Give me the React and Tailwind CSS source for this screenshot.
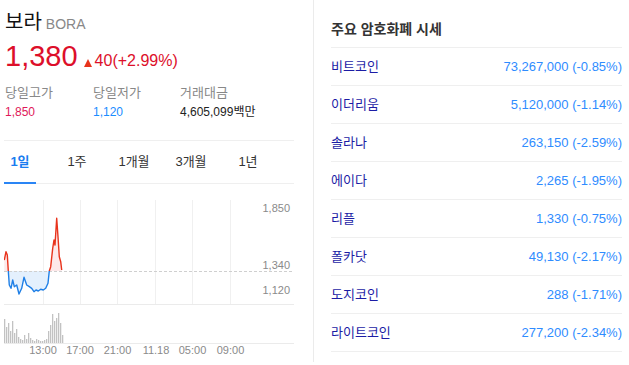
import React from 'react';

const coins = [
  { name: '비트코인', value: '73,267,000 (-0.85%)' },
  { name: '이더리움', value: '5,120,000 (-1.14%)' },
  { name: '솔라나', value: '263,150 (-2.59%)' },
  { name: '에이다', value: '2,265 (-1.95%)' },
  { name: '리플', value: '1,330 (-0.75%)' },
  { name: '폴카닷', value: '49,130 (-2.17%)' },
  { name: '도지코인', value: '288 (-1.71%)' },
  { name: '라이트코인', value: '277,200 (-2.34%)' },
];

const tabs = ['1일', '1주', '1개월', '3개월', '1년'];

// price line in page coordinates (svg viewBox is offset to match)
const pricePts = [
  [4.3, 260], [6, 251.7], [7.3, 255], [8.3, 271], [9.3, 285], [11, 288.3],
  [12.7, 280], [14.3, 286.7], [16.7, 285], [19, 294], [21.7, 288.3], [24, 277.3],
  [26.7, 285], [29.3, 286.7], [31.7, 288.3], [34, 291.7], [36, 290], [38.3, 291],
  [40.7, 289.3], [43.3, 290], [45.7, 288.3], [48, 283.3], [49.3, 271], [50.7, 266.7],
  [52.7, 248.3], [54, 240], [55, 245], [56.7, 218.3], [58, 236.7], [59.3, 256.7],
  [60.7, 261.7], [61.7, 270],
];

const volumes = [
  24, 16, 20, 12, 22, 10, 14, 6, 4, 3, 8, 4, 10, 5, 3, 2, 4, 3, 2, 2,
  3, 4, 12, 18, 29, 22, 25, 30, 20, 8,
];

const gridX = [43, 80, 117, 155, 192, 230];
const timeLabels = [
  ['13:00', 43], ['17:00', 80], ['21:00', 117.5], ['11.18', 156], ['05:00', 192.5], ['09:00', 230.5],
];

const PriceChart = () => {
  const line = pricePts.map((p, i) => `${i ? 'L' : 'M'}${p[0]} ${p[1]}`).join(' ');
  const area = `${line} L61.7 271 L4.3 271 Z`;
  return (
    <svg width="290" height="172" viewBox="4 190 290 172" className="block">
      <defs>
        <clipPath id="above"><rect x="0" y="190" width="300" height="81" /></clipPath>
        <clipPath id="below"><rect x="0" y="271" width="300" height="40" /></clipPath>
      </defs>
      {gridX.map((x) => (
        <line key={x} x1={x + 0.5} y1="200" x2={x + 0.5} y2="304" stroke="#f0f0f0" strokeWidth="1" />
      ))}
      <line x1="4" y1="304.5" x2="294" y2="304.5" stroke="#ebebeb" strokeWidth="1" />
      <line x1="4" y1="343.5" x2="294" y2="343.5" stroke="#ebebeb" strokeWidth="1" />
      <path d={area} fill="#fde9ea" clipPath="url(#above)" />
      <path d={area} fill="#e4f0fd" clipPath="url(#below)" />
      <line x1="4" y1="271.5" x2="292" y2="271.5" stroke="#cfcfcf" strokeWidth="1" strokeDasharray="3 2" />
      <path d={line} fill="none" stroke="#e8331c" strokeWidth="1.4" strokeLinejoin="round" clipPath="url(#above)" />
      <path d={line} fill="none" stroke="#1f7fe6" strokeWidth="1.4" strokeLinejoin="round" clipPath="url(#below)" />
      {volumes.map((h, i) => (
        <rect key={i} x={4 + i * 2} y={343 - h} width="1.3" height={h} fill="#c2c2c2" />
      ))}
      <g fontFamily="'Liberation Sans', Arial, sans-serif" fontSize="11" fill="#8a8a8a">
        <text x="290" y="212" textAnchor="end">1,850</text>
        <text x="290" y="269" textAnchor="end">1,340</text>
        <text x="290" y="294" textAnchor="end">1,120</text>
        {timeLabels.map(([t, x]) => (
          <text key={t} x={x} y="354" textAnchor="middle">{t}</text>
        ))}
      </g>
    </svg>
  );
};

export default function App() {
  return (
    <div
      className="flex w-[629px] h-[365px] bg-white overflow-hidden"
      style={{ fontFamily: "'Liberation Sans', 'Noto Sans CJK KR', sans-serif" }}
    >
      <div className="w-[314px] h-[362px] border-r border-[#ebebeb] pl-1 pr-[19px]">
        <div className="pt-[10px] pl-px flex items-baseline gap-[4px]">
          <span className="text-[20px] leading-[24px] text-[#111]">보라</span>
          <span className="text-[14px] text-[#888]">BORA</span>
        </div>
        <div className="mt-[5px] pl-px flex items-baseline text-[#dd0f2a]">
          <span className="text-[29px] leading-[32px]">1,380</span>
          <span className="ml-[6px] mr-[2px] self-end mb-[6px] w-0 h-0 border-l-[4.5px] border-r-[4.5px] border-b-[8px] border-l-transparent border-r-transparent border-b-[#e8331c]" />
          <span className="ml-px text-[16px]">40(+2.99%)</span>
        </div>
        <div className="mt-[12px] pl-px flex">
          <div className="w-[88px]">
            <div className="text-[13px] leading-[16px] text-[#888]">당일고가</div>
            <div className="mt-[3px] text-[12px] leading-[16px] text-[#e0185a]">1,850</div>
          </div>
          <div className="w-[87px]">
            <div className="text-[13px] leading-[16px] text-[#888]">당일저가</div>
            <div className="mt-[3px] text-[12px] leading-[16px] text-[#1a8cff]">1,120</div>
          </div>
          <div>
            <div className="text-[13px] leading-[16px] text-[#888]">거래대금</div>
            <div className="mt-[3px] text-[12px] leading-[16px] text-[#222]">4,605,099백만</div>
          </div>
        </div>
        <div className="mt-[20px] border-t border-b border-[#efefef] h-[44px] flex gap-[25px]">
          {tabs.map((t, i) => (
            <div
              key={t}
              className={
                i === 0
                  ? 'w-[32px] flex items-center justify-center text-[13px] font-bold text-[#1a7df0] border-b-2 border-[#2a85f5] -mb-px'
                  : 'w-[32px] flex items-center justify-center text-[13px] text-[#333] whitespace-nowrap'
              }
            >
              {t}
            </div>
          ))}
        </div>
        <div className="mt-[6px]">
          <PriceChart />
        </div>
      </div>
      <div className="flex-1 pl-[17px] pr-[7px]">
        <div className="h-[48px] border-b border-[#efefef] pt-[17px]">
          <span className="text-[14px] leading-[20px] font-bold text-[#333]">주요 암호화폐 시세</span>
        </div>
        {coins.map((c) => (
          <div key={c.name} className="h-[38px] border-b border-[#efefef] flex items-center justify-between text-[13px]">
            <span className="text-[#1c1ca5]">{c.name}</span>
            <span className="text-[#2f8cff]">{c.value}</span>
          </div>
        ))}
      </div>
    </div>
  );
}
